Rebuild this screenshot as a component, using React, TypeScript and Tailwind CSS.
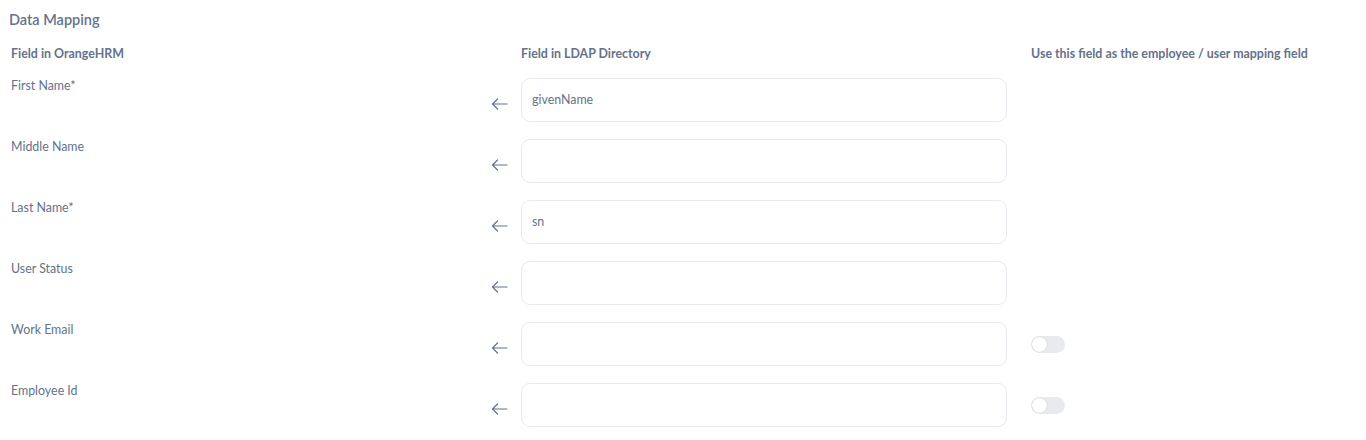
import React from "react";

const rows = [
  { label: "First Name*", value: "givenName", toggle: false },
  { label: "Middle Name", value: "", toggle: false },
  { label: "Last Name*", value: "sn", toggle: false },
  { label: "User Status", value: "", toggle: false },
  { label: "Work Email", value: "", toggle: true },
  { label: "Employee Id", value: "", toggle: true },
];

function Arrow() {
  return (
    <svg width="17" height="12" viewBox="0 0 17 12" fill="none">
      <path d="M16 6H1.5M1.5 6L6.5 1M1.5 6L6.5 11" stroke="#64728c" strokeWidth="1.2" strokeLinecap="round" strokeLinejoin="round" />
    </svg>
  );
}

export default function App() {
  return (
    <div className="w-[1366px] h-[440px] bg-white text-[#64728c] overflow-hidden" style={{ fontFamily: "Lato, 'Noto Sans', sans-serif" }}>
      <div className="pl-[9px] pt-[11px] text-[14.5px] font-semibold leading-[18px]">Data Mapping</div>
      <div className="pl-[11px] mt-[17px] grid grid-cols-[510px_510px_1fr] text-[12.4px] font-bold leading-[16px]">
        <div>Field in OrangeHRM</div>
        <div>Field in LDAP Directory</div>
        <div>Use this field as the employee / user mapping field</div>
      </div>
      <div className="pl-[11px] mt-[16px] flex flex-col gap-[17px]">
        {rows.map((r) => (
          <div key={r.label} className="grid grid-cols-[510px_510px_1fr] h-[44px]">
            <div className="relative flex justify-between">
              <div className="text-[12.4px] leading-[16px]">{r.label}</div>
              <div className="flex items-end pb-[12px] pr-[13px]">
                <Arrow />
              </div>
            </div>
            <div className="w-[486px] h-[44px] border border-[#e8eaef] rounded-[9px] flex items-center px-[10px] text-[12.4px]">
              {r.value}
            </div>
            <div className="flex items-center">
              {r.toggle && (
                <div className="w-[34px] h-[17px] rounded-full bg-[#e8eaef] flex items-center pl-[1px]">
                  <div className="w-[15px] h-[15px] rounded-full bg-white shadow-[0_0_1px_rgba(0,0,0,0.25)]" />
                </div>
              )}
            </div>
          </div>
        ))}
      </div>
    </div>
  );
}
